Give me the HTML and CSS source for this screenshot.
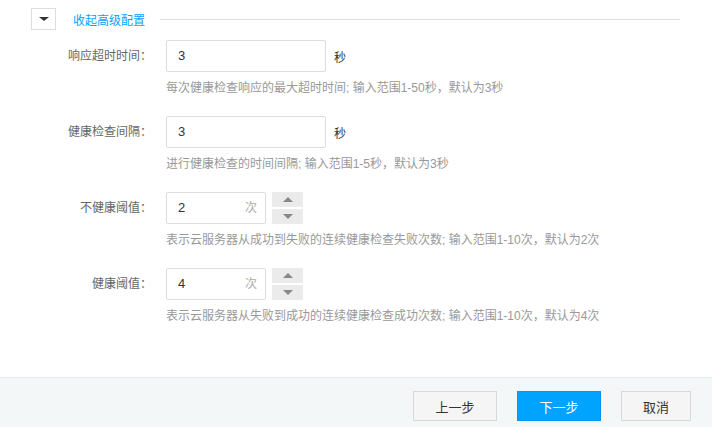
FILE: index.html
```html
<!DOCTYPE html>
<html lang="zh-CN">

<head>
    <meta charset="UTF-8">
    <title>高级配置</title>
    <link rel="stylesheet" href="styles.css">
</head>

<body>
    <div class="page">
        <!-- 折叠开关 -->
        <div class="toggle">
            <span class="toggle-btn"><i class="caret-down"></i></span>
            <span class="toggle-text">收起高级配置</span>
            <span class="toggle-line"></span>
        </div>

        <div class="form">
            <div class="row">
                <label class="label">响应超时时间：</label>
                <div class="field">
                    <div class="control">
                        <div class="input">3</div>
                        <span class="unit">秒</span>
                    </div>
                    <p class="help">每次健康检查响应的最大超时时间; 输入范围1-50秒，默认为3秒</p>
                </div>
            </div>
            <div class="row">
                <label class="label">健康检查间隔：</label>
                <div class="field">
                    <div class="control">
                        <div class="input">3</div>
                        <span class="unit">秒</span>
                    </div>
                    <p class="help">进行健康检查的时间间隔; 输入范围1-5秒，默认为3秒</p>
                </div>
            </div>
            <div class="row">
                <label class="label">不健康阈值：</label>
                <div class="field">
                    <div class="control">
                        <div class="input short">2<span class="suffix">次</span></div>
                        <div class="stepper">
                            <span class="step"><i class="caret-up"></i></span>
                            <span class="step"><i class="caret-down gray"></i></span>
                        </div>
                    </div>
                    <p class="help">表示云服务器从成功到失败的连续健康检查失败次数; 输入范围1-10次，默认为2次</p>
                </div>
            </div>
            <div class="row">
                <label class="label">健康阈值：</label>
                <div class="field">
                    <div class="control">
                        <div class="input short">4<span class="suffix">次</span></div>
                        <div class="stepper">
                            <span class="step"><i class="caret-up"></i></span>
                            <span class="step"><i class="caret-down gray"></i></span>
                        </div>
                    </div>
                    <p class="help">表示云服务器从失败到成功的连续健康检查成功次数; 输入范围1-10次，默认为4次</p>
                </div>
            </div>
        </div>
    </div>

    <!-- 底部按钮 -->
    <div class="footer">
        <button class="btn">上一步</button>
        <button class="btn primary">下一步</button>
        <button class="btn small">取消</button>
    </div>
</body>

</html>
```

FILE: styles.css
```css
* {
    margin: 0;
    padding: 0;
    box-sizing: border-box;
}

body {
    width: 712px;
    height: 427px;
    overflow: hidden;
    background-color: #fff;
    font-family: "Liberation Sans", "Noto Sans CJK SC", sans-serif;
    font-size: 12px;
    color: #333;
}

.page {
    height: 377px;
    padding-top: 8px;
}
/* 折叠开关 */

.toggle {
    display: flex;
    align-items: center;
    padding-left: 31px;
    padding-right: 32px;
}

.toggle-btn {
    display: flex;
    align-items: center;
    justify-content: center;
    width: 25px;
    height: 22px;
    border: 1px solid #ddd;
}

.caret-down {
    width: 0;
    height: 0;
    border-left: 5px solid transparent;
    border-right: 5px solid transparent;
    border-top: 4px solid #333;
}

.caret-up {
    width: 0;
    height: 0;
    border-left: 5px solid transparent;
    border-right: 5px solid transparent;
    border-bottom: 5px solid #888;
}

.caret-down.gray {
    border-top: 5px solid #888;
}

.toggle-text {
    margin-left: 17px;
    color: #00a4ff;
}

.toggle-line {
    flex: 1;
    height: 1px;
    margin-left: 15px;
    background-color: #ddd;
}
/* 表单 */

.form {
    padding-top: 10px;
}

.row {
    display: flex;
    margin-bottom: 21px;
}

.label {
    width: 152px;
    padding-top: 8px;
    text-align: right;
    color: #666;
    line-height: 16px;
}

.field {
    margin-left: 14px;
}

.control {
    display: flex;
    align-items: center;
}

.input {
    position: relative;
    width: 160px;
    height: 32px;
    line-height: 30px;
    padding-left: 11px;
    border: 1px solid #ddd;
    border-radius: 2px;
    color: #333;
    font-size: 13px;
}

.input.short {
    width: 100px;
}

.suffix {
    position: absolute;
    right: 8px;
    top: 0;
    color: #aaa;
    font-size: 12px;
}

.unit {
    margin-left: 8px;
    color: #333;
}

.stepper {
    display: flex;
    flex-direction: column;
    gap: 2px;
    margin-left: 6px;
}

.step {
    display: flex;
    align-items: center;
    justify-content: center;
    width: 31px;
    height: 15px;
    background-color: #ebebeb;
}

.help {
    margin-top: 9px;
    line-height: 14px;
    color: #999;
}
/* 底部按钮 */

.footer {
    display: flex;
    justify-content: flex-end;
    gap: 20px;
    height: 50px;
    padding: 13px 21px 0 0;
    background-color: #f4f7f8;
    border-top: 1px solid #e6e9eb;
}

.btn {
    width: 84px;
    height: 30px;
    border: 1px solid #d9d9d9;
    background-color: #f5f5f5;
    color: #333;
    font-family: "Liberation Sans", "Noto Sans CJK SC", sans-serif;
    font-size: 13px;
}

.btn.primary {
    background-color: #00a4ff;
    border-color: #0098f0;
    color: #fff;
}

.btn.small {
    width: 70px;
}
```
